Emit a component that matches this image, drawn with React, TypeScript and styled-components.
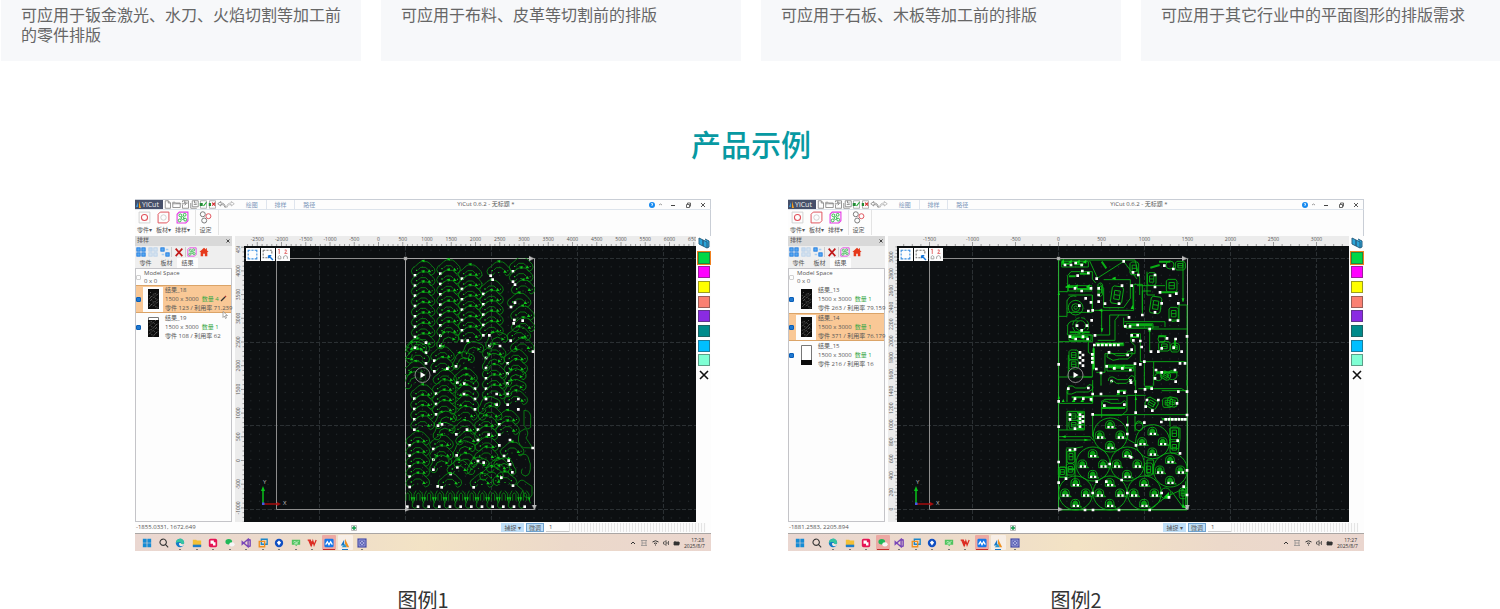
import React from 'react';
import styled, { createGlobalStyle, css } from 'styled-components';

const GlobalStyle = createGlobalStyle`
  * { box-sizing: border-box; }
  body {
    margin: 0;
    background: #fff;
    color: #333;
    font-family: "Noto Sans CJK SC", sans-serif;
    overflow-x: hidden;
  }
  button, input { font: inherit; color: inherit; margin: 0; padding: 0; border: 0; background: none; }
  button { cursor: pointer; }
  p, h2, figure, ul { margin: 0; padding: 0; }
  ul { list-style: none; }
  svg { display: block; flex: none; }
`;

/* ---------- page ---------- */

const Page = styled.main`
  overflow: hidden;
`;
const CardGrid = styled.section`
  display: grid;
  grid-template-columns: repeat(4, 1fr);
  gap: 20px;
  margin: 0 -1px 0 1px;
`;
const Card = styled.p`
  min-height: 61px;
  padding: 4px 20px 16px;
  background: #f7f8fa;
  color: #666;
  font-size: 16px;
  line-height: 20px;
`;
const Heading = styled.h2`
  margin: 60px 0 33px;
  padding-left: 2px;
  color: #0799a2;
  font-size: 30px;
  font-weight: 500;
  line-height: 45px;
  text-align: center;
`;
const Examples = styled.section`
  display: grid;
  grid-template-columns: 1fr 1fr;
  gap: 77px;
  padding: 0 136px 0 135px;
`;
const Caption = styled.figcaption`
  padding-top: 38px;
  color: #333;
  font-size: 20px;
  line-height: 22px;
  text-align: center;
`;

/* ---------- application window ---------- */

const Window = styled.div`
  overflow: hidden;
  background: #fdfdfd;
  color: #555;
  font-family: "Open Sans", "Noto Sans CJK SC", sans-serif;
  font-size: 6px;
  line-height: 9px;
  white-space: nowrap;
`;
const TitleBar = styled.div`
  display: flex;
  height: 11px;
  border: 1px solid #c9ced6;
  border-left: 0;
  border-bottom-color: #dde4ec;
`;
const Brand = styled.div`
  display: flex;
  align-items: center;
  width: 28px;
  gap: 1px;
  padding-left: 1px;
  background: #46506a;
  color: #f2f2f2;
  font-size: 7px;
`;
const QuickTools = styled.div`
  display: flex;
  align-items: center;
  width: 75px;
`;
const MenuTabs = styled.div`
  display: flex;
  width: 85px;
`;
const MenuTab = styled.button<{ $active?: boolean }>`
  flex: 1;
  color: #7e98bb;
  line-height: 11px;
  ${(p) => p.$active && css`
    border: 1px solid #dfe5ee;
    border-width: 0 1px;
  `}
`;
const Title = styled.div`
  flex: 1;
  text-align: center;
`;
const WindowButtons = styled.div`
  display: flex;
  align-items: center;
`;
const Ribbon = styled.div`
  display: flex;
  height: 26px;
  border-right: 1px solid #c9ced6;
`;
const RibbonGroup = styled.div`
  display: flex;
  height: 25px;
  padding: 1px 3px 0 0;
  border-right: 1px solid #e4e4e4;
`;
const RibbonButton = styled.button`
  display: flex;
  flex-direction: column;
  align-items: center;
  width: 19px;
  gap: 2px;
`;
const Body = styled.div`
  display: grid;
  grid-template-columns: 100px 9px 1fr 15px;
  height: 286px;
`;
const Dock = styled.aside`
  display: flex;
  flex-direction: column;
  margin-right: 3px;
  background: #efefef;
`;
const DockHeader = styled.div`
  display: flex;
  justify-content: space-between;
  height: 10px;
  padding: 0 2px;
  background: #d9d9d9;
`;
const DockTools = styled.div`
  display: flex;
  align-items: center;
  height: 12px;
`;
const DockTool = styled.button<{ $divider?: boolean; $faded?: boolean }>`
  display: flex;
  justify-content: center;
  width: 12px;
  opacity: ${(p) => (p.$faded ? 0.25 : 1)};
  ${(p) => p.$divider && css`
    width: 15px;
    border: 1px solid #ccc;
    border-width: 0 1px;
  `}
`;
const DockTabs = styled.div`
  display: flex;
  height: 10px;
`;
const DockTab = styled.button<{ $active?: boolean }>`
  width: 21px;
  background: ${(p) => (p.$active ? '#fdfdfd' : 'transparent')};
`;
const PartList = styled.ul`
  flex: 1;
  border: 1px solid #c4c4c8;
  background: #fdfdfd;
`;
const ModelSpace = styled.li`
  display: flex;
  align-items: center;
  height: 16px;
  gap: 3px;
  line-height: 8px;
`;
const PartRow = styled.li<{ $selected?: boolean }>`
  position: relative;
  display: flex;
  align-items: center;
  height: 28px;
  gap: 2px;
  background: ${(p) => (p.$selected ? '#f9c896' : 'transparent')};
  box-shadow: ${(p) => (p.$selected ? 'inset 0 1px #dba468, inset 0 -1px #dba468' : 'none')};
`;
const EditMark = styled.button`
  position: absolute;
  top: 10px;
  right: 4px;
`;
const Pointer = styled.svg`
  position: absolute;
  top: 26px;
  right: 3px;
`;
const Check = styled.input`
  appearance: none;
  flex: none;
  width: 5px;
  height: 5px;
  border: 1px solid #d0d0d0;
  border-radius: 1px;
  &:checked { border-color: #0a5fb8; background: #1f78d0; }
`;
const PartThumb = styled.span<{ $selected?: boolean }>`
  display: flex;
  flex: none;
  justify-content: center;
  align-items: center;
  width: 20px;
  height: 25px;
  background: ${(p) => (p.$selected ? '#fdfdfd' : 'transparent')};
`;
const PartText = styled.label``;
const Quantity = styled.span`
  margin-left: 3px;
  color: #35a845;
`;
const VRuler = styled.div`
  overflow: hidden;
  padding-top: 10px;
  background: #ececec;
`;
const Stage = styled.div`
  position: relative;
  overflow: hidden;
  background: #ececec;
`;
const Surface = styled.svg`
  width: 100%;
  height: 276px;
  background: #0c0f11;
`;
const RulerDrawing = styled.svg`
  width: 100%;
  height: 10px;
`;
const CanvasTools = styled.div`
  position: absolute;
  top: 12px;
  left: 2px;
  display: flex;
  gap: 1px;
`;
const CanvasTool = styled.button`
  display: flex;
  width: 14px;
  height: 13px;
  background: #fdfdfd;
`;
const Palette = styled.div`
  display: flex;
  flex-direction: column;
  justify-content: space-between;
  align-items: center;
  height: 145px;
  padding: 1px 0 0 1px;
`;
const Swatch = styled.button<{ $color: string; $selected?: boolean }>`
  width: 12px;
  height: 12px;
  border: 1px solid rgba(60, 60, 60, 0.5);
  background: ${(p) => p.$color};
  outline: ${(p) => (p.$selected ? '1px solid #f08020' : 'none')};
`;
const StatusBar = styled.div`
  display: flex;
  height: 12px;
  padding: 1px 5px 1px 1px;
  border-bottom: 1px solid #aaa6a4;
`;
const Coordinates = styled.div`
  flex: 3;
`;
const StatusSpace = styled.div`
  flex: 2;
`;
const SnapButton = styled.button<{ $outlined?: boolean }>`
  margin-right: 2px;
  padding: 0 3px;
  background: #bfdff8;
  line-height: 8px;
  box-shadow: ${(p) => (p.$outlined ? 'inset 0 0 0 1px #6fa3d0' : 'none')};
`;
const Step = styled.input`
  width: 23px;
  padding-left: 3px;
  border-bottom: 1px solid #ccc;
`;
const Stripes = styled.div<{ $wide?: boolean }>`
  width: ${(p) => (p.$wide ? 137 : 128)}px;
  background: repeating-linear-gradient(90deg, #e4e4e4 0 1px, #fbfbfb 1px 3px);
`;
const TaskBar = styled.div`
  display: flex;
  justify-content: space-between;
  height: 17px;
  padding: 0 7px 0 4px;
  background: linear-gradient(90deg, #ead7d1, #ecdacb 25%, #f3e3c5 50%, #ecd9ca 75%, #ead6cf);
`;
const Apps = styled.div`
  display: grid;
  grid-template-columns: repeat(14, 1fr);
  width: 231px;
`;
const AppButton = styled.button<{ $state?: 'alert' | 'open' | 'idle' }>`
  position: relative;
  display: flex;
  align-items: center;
  justify-content: center;
  margin: 1px;
  border-radius: 1px;
  background: ${(p) => (p.$state === 'alert' ? '#ecaaa4' : p.$state === 'open' ? '#f7eee6' : 'transparent')};
  &::after {
    content: "";
    position: absolute;
    bottom: 0;
    width: ${(p) => (p.$state === 'alert' ? 12 : p.$state === 'open' ? 6 : 2)}px;
    height: 1px;
    background: ${(p) => (p.$state === 'alert' ? '#c22c2c' : p.$state === 'open' ? '#1878c8' : p.$state === 'idle' ? '#777' : 'transparent')};
  }
`;
const Tray = styled.div`
  display: flex;
  align-items: center;
  gap: 4px;
  color: #333;
`;
const Clock = styled.div`
  width: 20px;
  font-size: 5px;
  line-height: 6px;
  text-align: right;
`;

/* ---------- small icons ---------- */

const Ico = ({ s = 10, children }: { s?: number; children: React.ReactNode }) => (
  <svg width={s} height={s} viewBox="0 0 12 12" fill="none" strokeWidth="1" aria-hidden="true">{children}</svg>
);

const quickIcons = [
  <path d="M3 1h4l3 3v7H3zM7 1v3h3" stroke="#777" />,
  <path d="M1 3h3l1 1h6v6H1zM1 5h10" stroke="#777" />,
  <path d="M2 3V1h8v10H2V6M5 1v3h4M1 5h5M5 3l2 2-2 2" stroke="#777" />,
  <path d="M3 1h8v8H3zM1 4v7h8M6 1v3h3M5 6h4" stroke="#777" />,
  <g><path d="M2 1h8v10H2z" stroke="#999" /><path d="M1 4h4v4H1z" fill="#238a35" /><path d="M6 8l4-5" stroke="#19a82b" strokeWidth="1.6" /></g>,
  <g><path d="M2 1h8v10H2z" stroke="#999" /><path d="M1 4h3v4H1z" fill="#238a35" /><path d="M5.500 3.500l4 4M9.500 3.500l-4 4" stroke="#d32a2a" strokeWidth="1.5" /></g>,
  <path d="M5 2L1 5l4 3V6c3 0 5 1 6 4 0-4-2-6-6-6z" stroke="#777" />,
  <path d="M7 2l4 3-4 3V6C4 6 2 7 1 10c0-4 2-6 6-6z" stroke="#aaa" />,
];

const nestIcon = (
  <g stroke="#e438e4"><path d="M3 1h8v8l-2 2H1V3z" />
    <g stroke="#2fb848" strokeWidth=".9"><circle cx="4" cy="4" r="1.3" /><circle cx="8" cy="3.5" r="1.3" /><circle cx="6" cy="6.5" r="1.3" /><circle cx="3.4" cy="8.7" r="1.3" /><circle cx="8.5" cy="8" r="1.3" /></g>
  </g>
);
const ribbonIcons = {
  part: <g><path d="M1 1h10v10H1z" stroke="#ccc" strokeWidth=".8" /><circle cx="6" cy="6" r="2.8" stroke="#e0525c" /></g>,
  board: <g><path d="M3 1h8v8l-2 2H1V3z" stroke="#e0525c" strokeWidth=".9" /><circle cx="6" cy="6" r="2.5" stroke="#ccc" strokeWidth=".8" /></g>,
  nest: nestIcon,
  settings: <g strokeWidth=".9"><circle cx="3.5" cy="3" r="2.3" stroke="#777" /><circle cx="8.7" cy="4.8" r="2.3" stroke="#e0525c" /><circle cx="4.8" cy="8.8" r="2.3" stroke="#777" /></g>,
};

const squares = (solid: number[]) => (
  <g>
    {[[1, 1], [7, 1], [1, 7], [7, 7]].map(([x, y], i) => (
      <rect key={i} x={x} y={y} width="4" height="4" fill={solid.includes(i) ? '#58a8f0' : '#8fc3f3'} stroke="#1878e0" />
    ))}
  </g>
);

type AppIcon = { name: string; art: React.ReactNode; state?: 'alert' | 'open' | 'idle' };
const taskIcons: AppIcon[] = [
  { name: '开始', art: <path d="M1 1h4.6v4.6H1zM6.4 1H11v4.6H6.4zM1 6.4h4.6V11H1zM6.4 6.4H11V11H6.4z" fill="#168bd4" /> },
  { name: '搜索', art: <path d="M5 1.3a3.8 3.8 0 1 0 .01 0M8 8l3 3.2" stroke="#333" strokeWidth="1.3" /> },
  { name: 'Edge', state: 'idle', art: <g><circle cx="6" cy="6" r="5" fill="#1479c9" /><path d="M1 6a5 5 0 0 1 10-.5C11 8 8 8 7.400 7 8 5 5 3.500 1 6z" fill="#36c4a0" /><path d="M5 6c-1 3 2 5 5 3L11 7C8 8 7 7 7 6z" fill="#f2e8e0" /></g> },
  { name: '文件', state: 'idle', art: <g><path d="M1 2h4l1 1h5v7H1z" fill="#f4bf35" /><path d="M1 8h10v3H1z" fill="#1e7dcb" /></g> },
  { name: '远程', state: 'idle', art: <g><rect x="1" y="1" width="10" height="10" rx="2" fill="#e51655" /><path d="M3 3h4v2h2v4H6V7H3z" fill="#fff" /></g> },
  { name: '微信', state: 'idle', art: <g><ellipse cx="4.500" cy="4.500" rx="4" ry="3.200" fill="#20b858" /><ellipse cx="8.400" cy="7.600" rx="3.200" ry="2.600" fill="#f5f5f5" /></g> },
  { name: 'Visual Studio', state: 'idle', art: <path d="M8.500 1.500v9L1.500 4.500v3zM8.500 1.500L11 2.500v7l-2.500 1" stroke="#7a48b8" strokeWidth="1.700" /> },
  { name: '虚拟机', state: 'idle', art: <g strokeWidth="1.600"><path d="M4 1.500h7v6H4z" stroke="#1c86c8" /><path d="M1.500 4h6.500v6.500H1.500z" stroke="#ee9020" /></g> },
  { name: '网盘', state: 'idle', art: <g><circle cx="6" cy="6" r="5" fill="#104fc2" /><path d="M6 3L3.500 5.500 6 9l2.500-3.500z" fill="#fff" /></g> },
  { name: '聊天', state: 'idle', art: <g><path d="M1 2h10v6H8l-2 2-1-2H1z" fill="#4fc35e" /><path d="M3 5c2-2 3 2 6-1M4 7h4" stroke="#eaffea" /></g> },
  { name: 'WPS', state: 'idle', art: <path d="M.8 2.500H4l1.500 6L7 3.500l1.500 5 2.500-6M2 2.500l2.500 6L6 4" stroke="#dc2c22" strokeWidth="1.500" /> },
  { name: '会议', state: 'alert', art: <g><rect x="0.500" y="1" width="11" height="10" rx="1.500" fill="#1678ea" /><path d="M2 8l2-3.500L6 8l2-3.500L10 8" stroke="#fff" strokeWidth="1.500" /></g> },
  { name: 'YiCut', state: 'open', art: <g><path d="M5 2v7H1z" fill="#1878c8" /><path d="M6 1l5 10H8L6 7z" fill="#f09020" /><path d="M2 11l4-4 2 4z" fill="#2a98cc" /></g> },
  { name: '录屏', state: 'idle', art: <g><rect x="0.500" y="0.500" width="11" height="11" fill="#4a50a8" /><path d="M2.500 2.500h7v7h-7z" stroke="#a5a9e5" /><circle cx="6" cy="6" r="1.800" stroke="#cdd0f5" /></g> },
];

/* ---------- rulers ---------- */

type Scale = { origin: number; unit: number; step: number; from: number; to: number };

const range = (n: number) => Array.from({ length: n }, (_, i) => i);

const HorizontalRuler = ({ origin, unit, step, from, to }: Scale) => (
  <RulerDrawing viewBox="0 0 452 10" preserveAspectRatio="xMinYMin slice">
    {range((to - from) / step + 2).map((i) => {
      const value = from + (i - 1) * step;
      const x = origin + (value / step) * unit;
      return (
        <g key={value}>
          {i > 0 && <text x={x} y="5" fontSize="5" fill="#555" textAnchor="middle">{value}</text>}
          {range(5).map((t) => <path key={t} d={`M${x + (t * unit) / 5} ${t ? 8 : 6}V10`} stroke="#777" strokeWidth=".7" />)}
        </g>
      );
    })}
  </RulerDrawing>
);

const VerticalRuler = ({ origin, unit, step, from, to }: Scale) => (
  <svg width="9" height="276" viewBox="0 0 9 276">
    {range((to - from) / step + 2).map((i) => {
      const value = from + (i - 1) * step;
      const y = origin - (value / step) * unit;
      return (
        <g key={value}>
          {i > 0 && <text transform={`translate(5 ${y}) rotate(-90)`} fontSize="5" fill="#555" textAnchor="middle">{value}</text>}
          {range(5).map((t) => <path key={t} d={`M${t ? 7.5 : 6} ${y - (t * unit) / 5}H9`} stroke="#777" strokeWidth=".7" />)}
        </g>
      );
    })}
  </svg>
);

/* ---------- nesting drawings ---------- */

type Pt = [number, number];

/* Start points of the arch parts; each group is in units of a third of a pixel. */
const upperParts: Pt[] = [
  [45, 76], [45, 107], [45, 137], [45, 168], [45, 199], [45, 230], [45, 261], [45, 293],
  [121, 71], [121, 102], [121, 133], [121, 164], [121, 195], [121, 226], [121, 257], [121, 288], [103, 332], [103, 364], [168, 349], [172, 398],
  [186, 86], [186, 117], [186, 148], [186, 179], [186, 210], [186, 241], [186, 272],
  [272, 77], [250, 132], [250, 163], [250, 194], [250, 225], [250, 256], [268, 288], [332, 272],
  [258, 324], [258, 354], [258, 385], [258, 416],
  [339, 64], [339, 95], [333, 171], [343, 210], [323, 340], [323, 370], [323, 400],
];
const upperMirrored: Pt[] = [[78, 308], [78, 340], [225, 416]];
const upperDots: Pt[] = [
  [78, 278], [142, 356], [203, 272], [193, 401], [278, 89], [268, 256], [300, 288], [345, 104], [345, 158], [341, 220], [368, 212], [399, 305],
];
const lowerParts: Pt[] = [
  [48, 116], [48, 147], [48, 178], [54, 212], [109, 238], [174, 224], [174, 255],
  [198, 132], [263, 117], [263, 149], [238, 208], [238, 239], [252, 303], [110, 301], [112, 337],
  [174, 318], [40, 282], [40, 314], [40, 344], [92, 357], [65, 397], [161, 397],
];
const lowerMirrored: Pt[] = [[165, 132], [165, 163], [277, 352], [279, 392]];
const lowerDots: Pt[] = [
  [132, 117], [66, 208], [141, 224], [206, 239], [230, 117], [230, 149], [270, 255], [238, 271], [266, 317], [270, 328],
  [191, 323], [53, 394], [244, 368], [338, 279], [295, 132], [295, 163],
];
const leftParts: Pt[] = [
  [853, 131], [853, 162], [853, 193], [853, 224], [839, 271], [839, 302], [839, 334], [839, 365], [839, 396],
];
/* Outlines in the irregular bands whose start point lies under a neighbour. */
const upperFillers: Pt[] = [[22, 376], [22, 408], [345, 245], [342, 306], [196, 318], [345, 132], [110, 402], [24, 318]];
const lowerFillers: Pt[] = [[50, 246], [112, 196], [118, 270], [185, 168], [186, 196], [176, 288], [152, 350], [210, 352], [190, 376]];

const Arch = ({ x, y, bare, mirror, tilt }: { x: number; y: number; bare?: boolean; mirror?: boolean; tilt?: boolean }) => (
  <g transform={`translate(${x} ${y})${mirror ? ' scale(-1 1)' : ''}`}>
    <g transform={tilt ? 'rotate(-24 22 -8)' : undefined}>
      <path d="M0 0L-8-4-11-13-7-22 1-27 11-37 18-41H36L44-36 51-28 58-21 60-12 56-4 48 0 42-5M0 0L8-3 12-9M10-17L17-24H32L39-17" />
      <path d="M18-45l11-2-1 8zM42-18l7 9H38z" fill="#12c41c" stroke="none" />
      <path d="M3-17h4v4H3zM50-16h3v3h-3zM22-10h4v2h-4z" fill="#12c41c" stroke="none" />
    </g>
    {!bare && <path d="M-4-4h8v8h-8z" fill="#fff" stroke="none" />}
  </g>
);

const Pierces = ({ points }: { points: Pt[] }) => (
  <path d={points.map(([x, y]) => `M${x - 4} ${y - 4}h8v8h-8z`).join('')} fill="#fff" stroke="none" />
);

const CurvedNest = () => (
  <g stroke="#089212" strokeWidth="2.400" fill="none" strokeLinejoin="round" clipPath="url(#sheet-clip)">
    <clipPath id="sheet-clip"><path d="M161 12H291V264H161z" /></clipPath>
    <g transform="translate(156 4) scale(.33333)">
      {upperFillers.map(([x, y], i) => <Arch key={i} x={x} y={y} bare tilt={i % 3 === 1} />)}
      {upperParts.map(([x, y], i) => <Arch key={i} x={x} y={y} tilt={y > 265 && i % 3 === 0} />)}
      {upperMirrored.map(([x, y], i) => <Arch key={i} x={x} y={y} mirror />)}
      <Pierces points={upperDots} />
    </g>
    <g transform="translate(176 109) scale(.33333)">
      {lowerFillers.map(([x, y], i) => <Arch key={i} x={x} y={y} bare tilt={i % 3 === 0} />)}
      {lowerParts.map(([x, y], i) => <Arch key={i} x={x} y={y} tilt={i % 5 === 3} />)}
      {lowerMirrored.map(([x, y], i) => <Arch key={i} x={x} y={y} mirror tilt={i === 2} />)}
      {range(12).map((i) => (
        <g key={i} transform={`translate(${-38 + i * 32} 455)`}>
          <path d="M0 0L-10 5-17 0-17-10-12-20V-36L-6-48M5-48L13-38V-20L18-10M-4-18V-36L1-42 6-36V-18" />
          <path d="M-4-4h8v8h-8z" fill="#fff" stroke="none" />
          <path d="M-15-28h7l-3 12zM10-28h7l-3 12z" fill="#12c41c" stroke="none" />
        </g>
      ))}
      <path d="M290 390q12-25 28-8l18 12v26q-7 14-22 5l-6-20zM296 300q28-10 31 15l4 12q2 35-15 36-18-5-9-22M312 166q24 0 20 30v20q-9 14-20-5zM300 230q-14 35 10 48l28 1-20-30q12-16-2-28z" />
      <Pierces points={lowerDots} />
    </g>
    <g transform="translate(-114 109) scale(.33333)">
      {leftParts.map(([x, y], i) => <Arch key={i} x={x} y={y} />)}
    </g>
  </g>
);

const discs: Pt[] = [[166, 165], [293, 185], [114, 252], [217, 252], [346, 270], [62, 339], [165, 339], [268, 339]];
const headOffsets: Pt[] = [[0, -31], [-31, 0], [31, 0], [0, 31]];

/* White pierce points, one list for each half of the sheet. */
const upperPierces: Pt[] = [
  [30, 30], [48, 30], [62, 24], [80, 30], [206, 19], [125, 71], [68, 62], [82, 48], [100, 54], [60, 100], [80, 108], [108, 100],
  [131, 100], [131, 120], [131, 140], [150, 146], [201, 92], [230, 92], [192, 146], [234, 52], [250, 60], [300, 60], [328, 32],
  [355, 42], [300, 96], [345, 122], [315, 112], [364, 116], [370, 145], [300, 172], [320, 145], [262, 180], [345, 195], [369, 197],
  [73, 152], [92, 130], [108, 142], [100, 168], [113, 166], [66, 212], [80, 226], [96, 212], [110, 196], [45, 245], [62, 252], [84, 245], [98, 252],
  [120, 241], [222, 187], [211, 214], [225, 214], [248, 210], [284, 222], [230, 241], [248, 241], [235, 256], [256, 258], [260, 276],
  [396, 244], [336, 250], [320, 280], [362, 252], [356, 278], [380, 290], [288, 290], [310, 290], [162, 292], [218, 300], [230, 284], [155, 334],
  [178, 340], [202, 340], [226, 345], [240, 326], [268, 320], [256, 328], [303, 345], [320, 352], [360, 345], [375, 325], [390, 325], [300, 370], [362, 380],
  [75, 292], [75, 308], [75, 324], [84, 300], [84, 316], [84, 332], [112, 298], [112, 310], [112, 322], [124, 342], [138, 354], [170, 378], [226, 376], [11, 328],
  [118, 270], [130, 270], [142, 270], [154, 270], [166, 270], [178, 270], [190, 270],
];
const lowerPierces: Pt[] = [
  [40, 26], [100, 24], [113, 42], [60, 56], [85, 56], [108, 58], [11, 64], [11, 140], [113, 103], [75, 104], [75, 116], [75, 128], [75, 140], [84, 110], [84, 124],
  [45, 104], [45, 118], [60, 146], [138, 42], [190, 35], [208, 38], [228, 8], [242, 98], [242, 35], [270, 28], [290, 26], [148, 77], [208, 74],
  [276, 60], [272, 80], [292, 92], [310, 60], [370, 35], [396, 35], [366, 70], [396, 105], [319, 126], [332, 118], [342, 118], [352, 118], [362, 118], [372, 118], [382, 118], [391, 118],
  [217, 135], [217, 162], [268, 128], [368, 182], [375, 220], [396, 271], [396, 345], [396, 384], [243, 196], [228, 232], [164, 252], [60, 208], [45, 210], [33, 296],
  [11, 246], [11, 308], [113, 339], [217, 339], [320, 339], [342, 352], [386, 320], [90, 390], [114, 390], [192, 390], [284, 390], [154, 305], [200, 300], [125, 305],
];

const Head = ({ x, y }: { x: number; y: number }) => (
  <g transform={`translate(${x} ${y})`}>
    <path d="M-14 7v-6q0-13 13-13t13 13v6l6 4H-14z" />
    <path d="M-8-1q1-6 7-6t7 6v5h-14z" fill="#0a9a14" />
    <path d="M-9 4h7v7h-7zM3 4h7v7H3z" fill="#fff" stroke="none" />
  </g>
);

/* Small bracket part: an outline with a window and a cross bar. */
const Bracket = ({ x, y, w = 26, h = 38, r = 0 }: { x: number; y: number; w?: number; h?: number; r?: number }) => (
  <g transform={`translate(${x} ${y}) rotate(${r})`}>
    <path d={`M${-w / 2 + 5} ${-h / 2}H${w / 2 - 4}L${w / 2} ${-h / 2 + 6}V${h / 2 - 5}L${w / 2 - 6} ${h / 2}H${-w / 2 + 3}L${-w / 2} ${h / 2 - 6}V${-h / 2 + 5}z`} />
    <path d={`M${-w / 4} ${-h / 4}H${w / 4}V${h / 4}H${-w / 4}zM${-w / 4} 0H${w / 4}`} />
  </g>
);

const PlateNest = () => (
  <g stroke="#0aac15" strokeWidth="2.800" fill="none">
    <g transform="translate(158 9) scale(.33333)">
      <path d="M11 10V392M396 150V392M11 15H240L254 70M125 71L206 19L246 72M104 18L127 68M11 110H38V62L48 50H112V72L122 84M11 184H36V138Q44 118 64 124M36 172H112V120H40M11 260H112V240H38V210Q44 194 70 198" />
      <path d="M146 74H226V130L206 158H146V100L136 88M112 120V166H236V88H262V166M246 92H330M140 166V232M116 240H164V180H222M128 256H180V196L192 180M206 188V216H312M208 200H330V216M234 92V160M262 176V108H288M284 222V290M276 222H396M396 150H372V196L350 200M384 20V140" />
      <path d="M116 272H206V262M116 272V346M124 352H150V296H240V272L228 260V236H256V320H392M150 330H240V392M40 300V366H112V300L100 292V260M11 366H112M296 320V392M276 50V120H300M254 70V120M268 324V392M138 350V392" />
      <path d="M156 306q0-18 18-10l10 6h26l10-14q16 0 10 14l-12 10h-24l-20 4zM160 378q0-14 14-12l14 8h30l10-12q14 0 10 14l-14 10" />
      <path d="M20 26h24M58 28h28M32 96h24M66 102h40M44 232h60M140 20l14 20M286 38l28-8M312 20h34M318 112h50M180 338h54M222 210h70M360 250v30M310 244h24M302 352h66M42 64h20M74 56h30M40 246h60M160 336h50M226 246h26" strokeWidth="6" />
      <path d="M20 20h80v16H20zM40 92h70v16H40zM42 240h66v16H42zM156 332h80v16h-80zM214 206h80v14h-80z" />
      <path d="M122 266H204M116 280V342" stroke="#18d823" strokeWidth="6" />
      <circle cx="62" cy="158" r="22" /><circle cx="62" cy="158" r="12" /><circle cx="62" cy="158" r="5" />
      <circle cx="77" cy="212" r="15" /><circle cx="77" cy="212" r="24" strokeDasharray="14 5" />
      <circle cx="320" cy="252" r="11" /><circle cx="345" cy="30" r="12" /><circle cx="310" cy="366" r="11" /><circle cx="352" cy="360" r="14" />
      <Bracket x={186} y={120} w={34} h={52} r={8} /><Bracket x={302} y={150} w={32} h={50} r={8} /><Bracket x={238} y={40} />
      <Bracket x={290} y={72} /><Bracket x={350} y={92} w={32} /><Bracket x={376} y={32} w={30} h={26} /><Bracket x={356} y={176} w={28} />
      <Bracket x={328} y={274} w={34} h={28} /><Bracket x={360} y={278} w={26} h={26} /><Bracket x={56} y={300} w={28} h={30} /><Bracket x={56} y={328} w={28} h={30} />
      <Bracket x={332} y={362} w={28} h={22} r={30} /><Bracket x={136} y={104} w={14} h={40} />
      <path d="M18 22l8-10 2 14zM40 22l10-8v12zM62 22l12-8v12zM82 22l12-8v12zM34 94l10-8v14zM56 96l12-8v14zM92 96l12-8v14zM232 150l5 12h-10zM137 220h8l-4 12zM280 230h8l-4-12zM380 130h8l-4 12zM8 120h7l-4-12zM170 70l12-5v10zM130 166l12-5v10zM46 250l12-10v14zM76 250l12-10v14zM170 342l12-14v16zM196 342l12-14v16z" fill="#10d41d" stroke="none" />
      <Pierces points={upperPierces} />
    </g>
    <g transform="translate(158 134) scale(.33333)">
      <path d="M11 0V390H396V0M11 70H113V0M36 26V66M40 18h12l10 6h30l10-10q16 0 10 14l-12 8H64l-14 6H38zM113 48H216V92L200 106H113V170M113 104H396M140 112V64L150 58H190M242 0V98M216 46H272M250 26H380L396 36M320 32H396M11 150H36V94H88V150M36 150H88M11 170H106L116 182M11 180H108" />
      <path d="M142 74q0-14 12-10l14 6h30l10-8q12 8 4 20H150zM168 10q0-16 16 0h30l12-12M218 108V178L240 190M240 108V154M240 136q6-24 26-4M345 110V140M345 144h30v32l-4 30h-24zM320 116H396M34 204H64L84 200M34 206V286M60 206V300M14 262h22v30H14zM276 240h20v42h-20zM392 304V384M284 388L334 350L396 322M350 334L384 382M384 324v60" />
      <path d="M50 52h64M190 32h24M270 20h24M140 84h70M40 214h20M40 268h20M66 98h20M66 110h20M66 122h20M66 134h20M66 146h20M322 118h72" strokeWidth="6" />
      <Bracket x={56} y={108} w={28} h={26} /><Bracket x={56} y={134} w={28} h={26} /><Bracket x={290} y={70} w={36} h={28} r={30} /><Bracket x={338} y={68} w={30} h={28} /><Bracket x={352} y={66} w={30} h={28} r={12} />
      <Bracket x={358} y={160} w={26} /><Bracket x={358} y={202} w={26} h={34} /><Bracket x={48} y={230} w={24} /><Bracket x={46} y={268} w={24} h={34} /><Bracket x={22} y={276} w={24} h={30} /><Bracket x={281} y={268} w={24} /><Bracket x={384} y={340} w={22} h={32} />
      <circle cx="332" cy="340" r="16" /><circle cx="252" cy="140" r="12" />
      {discs.map(([x, y], i) => (
        <g key={i}>
          <circle cx={x} cy={y} r="51" />
          {headOffsets.map(([dx, dy], k) => <Head key={k} x={x + dx} y={y + dy} />)}
        </g>
      ))}
      <path d="M20 66l5-9 4 9zM50 66l10-14v14zM76 66l10-14v14zM106 66l8-14v14zM384 372l12 14-16-4zM326 352l16-16v20zM184 44l10-14v14zM8 56h7l-4-12zM239 60h7l-4-12zM20 170l12-4v8zM100 180l-12-4v8z" fill="#10d41d" stroke="none" />
      <Pierces points={lowerPierces} />
    </g>
  </g>
);

const Drawing = ({ id, children }: { id: string; children: React.ReactNode }) => (
  <Surface viewBox="0 0 452 276" preserveAspectRatio="xMinYMin meet">
    <defs>
      <pattern id={id} x="71.200" y="8.300" width="8.580" height="8.370" patternUnits="userSpaceOnUse">
        <rect x="3.800" y="3.700" width="1" height="1" fill="#2a3033" />
      </pattern>
    </defs>
    <rect width="452" height="276" fill={`url(#${id})`} />
    <path d="M75.500 0V276M161.500 0V276M247.500 0V276M333.500 0V276M419.500 0V276M0 12.500H452M0 96.500H452M0 179.500H452M0 263.500H452" stroke="#2b3033" strokeWidth="1" strokeDasharray="4 2" />
    <path d="M161.500 12.500H32.500V263.500H161.500" stroke="#8d8d8d" fill="none" />
    <path d="M161.500 12.500H290.500V263.500H161.500z" stroke="#a5a5a5" fill="none" />
    {children}
    <path d="M160 11h3v3h-3zM285 10l5 2.500-5 2.500M161 261l5 2.500-5 2M288 259l2.500 5 2-5" fill="#bbb" stroke="#888" strokeWidth=".5" />
    <circle cx="178.500" cy="129" r="7.500" fill="#0c0f11" fillOpacity=".6" stroke="#8a8a8a" />
    <path d="M176.500 126l5 3-5 3z" fill="#fff" />
    <path d="M19 257V243" stroke="#08c21a" strokeWidth="1.500" /><path d="M17 245l2-5 2 5z" fill="#08c21a" />
    <path d="M19 258H35" stroke="#a50d0d" strokeWidth="1.500" /><path d="M33 256l4 2-4 2z" fill="#a50d0d" />
    <rect x="18" y="256.500" width="2.500" height="2.500" fill="#4258e8" />
    <text x="19" y="238" fontSize="6" fill="#bbb">Y</text>
    <text x="39" y="259" fontSize="6" fill="#bbb">X</text>
  </Surface>
);

const Thumbnail = ({ seed, cut }: { seed: number; cut: 'full' | 'cap' | 'foot' }) => (
  <svg width="11" height="20" viewBox="0 0 11 20">
    <path d="M.5.5h10v19H.5z" fill="#fff" stroke="#777" />
    <path d={cut === 'foot' ? 'M0 15h11v5H0z' : cut === 'cap' ? 'M0 3h11v17H0z' : 'M0 0h11v20H0z'} fill="#0c0c0c" />
    {cut !== 'foot' && range(34).map((i) => {
      const x = 1 + ((i * i * 3 + seed * 5 + i) % 9);
      return <path key={i} d={`M${x} ${4 + ((i * 15) / 34)}l1 ${i % 2 ? 1 : -1}`} stroke="#888" strokeWidth=".6" />;
    })}
  </svg>
);

/* ---------- window ---------- */

type Part = { name: string; qty: string; summary: string; selected?: boolean; editable?: boolean; cut: 'full' | 'cap' | 'foot' };
type EditorProps = {
  id: string; parts: Part[]; horizontal: Scale; vertical: Scale; position: string; clock: string;
  alertChat?: boolean; wideStripes?: boolean; children: React.ReactNode;
};

const swatches = [
  ['绿色', '#00d846'], ['品红', '#ff00ff'], ['黄色', '#ffff00'], ['橙红', '#fa8072'],
  ['紫色', '#8a2be2'], ['青色', '#008b8b'], ['天蓝', '#00bfff'], ['碧绿', '#7fffd4'],
];
const quickNames = ['新建', '打开', '导入', '保存', '导出', '关闭', '撤销', '重做'];

const Editor = ({ id, parts, horizontal, vertical, position, clock, alertChat, wideStripes, children }: EditorProps) => (
  <Window>
    <TitleBar>
      <Brand>
        <svg width="5" height="7" viewBox="0 0 5 7"><path d="M2 1v5H0z" fill="#3a98dd" /><path d="M3 0l2 7H3z" fill="#f5a01e" /></svg>
        YiCut
      </Brand>
      <QuickTools>
        {quickIcons.map((art, i) => <button key={i} aria-label={quickNames[i]}><Ico s={9}>{art}</Ico></button>)}
      </QuickTools>
      <MenuTabs>
        <MenuTab>绘图</MenuTab><MenuTab $active>排样</MenuTab><MenuTab>路径</MenuTab>
      </MenuTabs>
      <Title>YiCut 0.6.2 - 无标题 *</Title>
      <WindowButtons>
        <button aria-label="帮助"><svg width="6" height="6" viewBox="0 0 6 6"><circle cx="3" cy="3" r="3" fill="#168af0" /><path d="M2 2q1-1 2 0L3 3v1" stroke="#fff" fill="none" strokeWidth=".8" /></svg></button>
        <button aria-label="收起"><svg width="11" height="8" viewBox="0 0 11 8"><path d="M4 4l1.500-1L7 4" stroke="#999" fill="none" /></svg></button>
        <button aria-label="最小化"><svg width="15" height="8" viewBox="0 0 15 8"><path d="M5 4.500h4" stroke="#444" /></svg></button>
        <button aria-label="还原"><svg width="15" height="8" viewBox="0 0 15 8"><path d="M5.500 3.500h3v3h-3zM6.500 3V2h3v3.500" stroke="#555" strokeWidth=".9" fill="none" /></svg></button>
        <button aria-label="关闭"><svg width="14" height="8" viewBox="0 0 14 8"><path d="M5 2l4 4M9 2L5 6" stroke="#444" strokeWidth=".9" fill="none" /></svg></button>
      </WindowButtons>
    </TitleBar>
    <Ribbon>
      <RibbonGroup>
        <RibbonButton><Ico s={13}>{ribbonIcons.part}</Ico>零件▾</RibbonButton>
        <RibbonButton><Ico s={13}>{ribbonIcons.board}</Ico>板材▾</RibbonButton>
        <RibbonButton><Ico s={13}>{ribbonIcons.nest}</Ico>排样▾</RibbonButton>
      </RibbonGroup>
      <RibbonGroup>
        <RibbonButton><Ico s={13}>{ribbonIcons.settings}</Ico>设定</RibbonButton>
      </RibbonGroup>
    </Ribbon>
    <Body>
      <Dock>
        <DockHeader>排样<button aria-label="关闭面板"><svg width="4" height="4" viewBox="0 0 4 4"><path d="M.5.5l3 3M3.500.5l-3 3" stroke="#222" strokeWidth=".8" /></svg></button></DockHeader>
        <DockTools>
          <DockTool aria-label="全选"><Ico>{squares([0, 1, 2, 3])}</Ico></DockTool>
          <DockTool aria-label="全不选" $faded><Ico>{squares([0])}</Ico></DockTool>
          <DockTool aria-label="反选"><Ico><g fill="#58a8f0" stroke="#1878e0"><rect x="1" y="1" width="4" height="4" /><rect x="7" y="7" width="4" height="4" /><path d="M7 3h3M2 9h3" stroke="#a5cdf2" strokeWidth="2" /></g></Ico></DockTool>
          <DockTool aria-label="删除" $divider><Ico><path d="M2 2l8 9M10 2L2 11" stroke="#c11a1a" strokeWidth="2" /></Ico></DockTool>
          <DockTool aria-label="排样"><Ico>{nestIcon}</Ico></DockTool>
          <DockTool aria-label="主页"><Ico><path d="M6 1L0.500 6H2v5h3V8h2v3h3V6h1.500L9.500 4V1.500H8.500V3z" fill="#e63a1c" /></Ico></DockTool>
        </DockTools>
        <DockTabs><DockTab>零件</DockTab><DockTab>板材</DockTab><DockTab $active>结果</DockTab></DockTabs>
        <PartList>
          <ModelSpace>
            <Check type="checkbox" id={`${id}-model`} />
            <PartText htmlFor={`${id}-model`}>Model Space<br />0 x 0</PartText>
          </ModelSpace>
          {parts.map((p, i) => (
            <PartRow key={p.name} $selected={p.selected}>
              <Check type="checkbox" id={`${id}-${i}`} defaultChecked />
              <PartThumb $selected={p.selected}><Thumbnail seed={i + 2} cut={p.cut} /></PartThumb>
              <PartText htmlFor={`${id}-${i}`}>
                {p.name}<br />1500 x 3000<Quantity>数量 {p.qty}</Quantity><br />{p.summary}
              </PartText>
              {p.editable && (
                <>
                  <EditMark aria-label="编辑"><svg width="7" height="7" viewBox="0 0 7 7"><path d="M1 6l4-4" stroke="#333" strokeWidth="1.200" /><path d="M5 2l1-1" stroke="#b03030" strokeWidth="1.200" /></svg></EditMark>
                  <Pointer width="6" height="8" viewBox="0 0 6 8"><path d="M1 .5v6l1.500-1.500 1 2.500 1-.5-1-2.500h2z" fill="#fff" stroke="#777" strokeWidth=".6" /></Pointer>
                </>
              )}
            </PartRow>
          ))}
        </PartList>
      </Dock>
      <VRuler><VerticalRuler {...vertical} /></VRuler>
      <Stage>
        <HorizontalRuler {...horizontal} />
        <Drawing id={`${id}-dots`}>{children}</Drawing>
        <CanvasTools>
          <CanvasTool aria-label="框选"><Ico s={13}><path d="M2 4V2h2M8 2h2v2M10 8v2H8M4 10H2V8M5 2h2M2 5v2M5 10h2M10 5v2" stroke="#3a8ee0" /></Ico></CanvasTool>
          <CanvasTool aria-label="移动选择"><Ico s={13}><path d="M2 2h8v3M2 2v7h4" stroke="#777" strokeDasharray="2 1" /><path d="M7 7l4 4M7 7v2.500M7 7h2.500" stroke="#1676d8" strokeWidth="1.300" /></Ico></CanvasTool>
          <CanvasTool aria-label="排序"><Ico s={13}><path d="M2 1.500l1-.500v4.500M8 2q2-1 1.500 1L8 5h2.500" stroke="#e05858" strokeWidth=".8" /><path d="M2 10V8q1-2 2.500 0v2zM7 10V8q2-2 3.500 0v2" stroke="#999" strokeWidth=".8" /></Ico></CanvasTool>
        </CanvasTools>
      </Stage>
      <Palette>
        <button aria-label="图层"><Ico s={12}><path d="M1 1l4 2v6L1 7zM5 3l4 2v6L5 9zM7 2l4 2v6l-2 1" fill="#2aa4d8" stroke="#285f80" /></Ico></button>
        {swatches.map(([name, color], i) => <Swatch key={name} aria-label={name} $color={color} $selected={i === 0} />)}
        <button aria-label="清除颜色"><Ico s={12}><path d="M2 2l8 8M10 2l-8 8" stroke="#111" strokeWidth="1.600" /></Ico></button>
      </Palette>
    </Body>
    <StatusBar>
      <Coordinates>{position}</Coordinates>
      <svg width="8" height="9" viewBox="0 0 8 9"><path d="M1.500 2.500h5v5h-5z" stroke="#bbb" fill="#f2f2f2" /><path d="M4 3v4M2 5h4" stroke="#129a4c" strokeWidth="1.400" /></svg>
      <StatusSpace />
      <SnapButton>捕捉 ▾</SnapButton>
      <SnapButton $outlined>微调</SnapButton>
      <Step aria-label="步长" defaultValue="1" />
      <Stripes $wide={wideStripes} />
    </StatusBar>
    <TaskBar>
      <Apps>
        {taskIcons.map((a) => (
          <AppButton key={a.name} aria-label={a.name} $state={alertChat && a.name === '微信' ? 'alert' : a.state}>
            <Ico s={10}>{a.art}</Ico>
          </AppButton>
        ))}
      </Apps>
      <Tray>
        <svg width="8" height="6" viewBox="0 0 8 6"><path d="M3 4l2-2 2 2" stroke="currentColor" fill="none" /></svg>
        <svg width="8" height="6" viewBox="0 0 8 6"><path d="M1 .5h6M1 5.500h6M2 3h4M2 .5v5M6 .5v5" stroke="#888" strokeWidth=".7" fill="none" /></svg>
        <svg width="7" height="6" viewBox="0 0 7 6"><path d="M.5 2q3-2.500 6 0M2 3.500q1.500-1 3 0M3 5h1" stroke="currentColor" fill="none" /></svg>
        <svg width="6" height="6" viewBox="0 0 6 6"><path d="M.5 2h1L3 .5v5L1.500 4h-1zM4 2v2M5.500 1v4" stroke="currentColor" strokeWidth=".7" fill="none" /></svg>
        <svg width="7" height="6" viewBox="0 0 7 6"><path d="M1 2h5v3H1zM6 3h1M2 1v2" fill="currentColor" stroke="currentColor" strokeWidth=".8" /></svg>
        <Clock>{clock}<br />2025/8/7</Clock>
      </Tray>
    </TaskBar>
  </Window>
);

const cards = [
  '可应用于钣金激光、水刀、火焰切割等加工前的零件排版',
  '可应用于布料、皮革等切割前的排版',
  '可应用于石板、木板等加工前的排版',
  '可应用于其它行业中的平面图形的排版需求',
];

export default function App() {
  return (
    <Page lang="zh-CN">
      <GlobalStyle />
      <CardGrid>{cards.map((text) => <Card key={text}>{text}</Card>)}</CardGrid>
      <Heading>产品示例</Heading>
      <Examples>
        <figure>
          <Editor
            id="curved"
            position="-1855.0331, 1672.649"
            clock="17:28"
            wideStripes
            horizontal={{ origin: 134.5, unit: 24.25, step: 500, from: -2500, to: 6500 }}
            vertical={{ origin: 214.5, unit: 23.7, step: 500, from: -1000, to: 4500 }}
            parts={[
              { name: '结果_18', qty: '4', summary: '零件 123 / 利用率 71.239', selected: true, editable: true, cut: 'full' },
              { name: '结果_19', qty: '1', summary: '零件 108 / 利用率 62', cut: 'cap' },
            ]}
          >
            <CurvedNest />
          </Editor>
          <Caption>图例1</Caption>
        </figure>
        <figure>
          <Editor
            id="plate"
            position="-1881.2583, 2205.894"
            clock="17:27"
            alertChat
            horizontal={{ origin: 161.5, unit: 43, step: 500, from: -1500, to: 3000 }}
            vertical={{ origin: 263, unit: 16.8, step: 200, from: 0, to: 3000 }}
            parts={[
              { name: '结果_13', qty: '1', summary: '零件 263 / 利用率 79.159', cut: 'full' },
              { name: '结果_14', qty: '1', summary: '零件 371 / 利用率 76.179', selected: true, cut: 'full' },
              { name: '结果_15', qty: '1', summary: '零件 216 / 利用率 16', cut: 'foot' },
            ]}
          >
            <PlateNest />
          </Editor>
          <Caption>图例2</Caption>
        </figure>
      </Examples>
    </Page>
  );
}
